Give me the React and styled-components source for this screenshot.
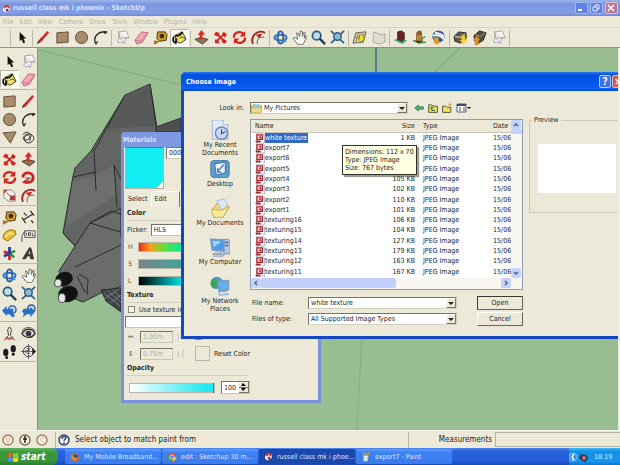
import React from "react";
import styled, { createGlobalStyle, css } from "styled-components";

const Global = createGlobalStyle`
  * { box-sizing: border-box; }
  html, body { margin: 0; height: 100%; overflow: hidden; }
  body, button, input, select, table {
    font-family: "DejaVu Sans Condensed", "Noto Sans", sans-serif;
    font-size: 7px;
    line-height: 8px;
    color: #26251f;
  }
  button, input, select { margin: 0; padding: 0; border: 0; border-radius: 0; background: none; min-width: 0; outline: none; }
  svg { display: block; }
`;

const Screen = styled.div`
  height: 100vh;
  display: grid;
  grid-template-rows: 16px 12px 20px minmax(0, 1fr) 18px 17px;
  background: #ece9d8;
  overflow: hidden;
`;

/* ---------- application window ---------- */
const AppTitle = styled.header`
  display: flex;
  align-items: center;
  gap: 2px;
  padding: 0 2px;
  background: linear-gradient(#9db4ec, #7b97e0 25%, #819de4 80%, #6f8bd6);
  color: #dbe5fb;
`;
const TitleText = styled.h1`
  flex: 1;
  margin: 0;
  font-size: 7px;
  line-height: 12px;
  font-weight: bold;
  color: inherit;
  white-space: nowrap;
`;
const CaptionButton = styled.button`
  width: 13px;
  height: 12px;
  border: 1px solid ${(p) => (p.$close ? "#dcc0d0" : "#a4b9f2")};
  border-radius: 2px;
  background: ${(p) => (p.$close ? "#bd7590" : "#5f80e2")};
`;
const MenuBar = styled.nav`
  display: flex;
  align-items: center;
  gap: 6px;
  padding-left: 3px;
  border-bottom: 1px solid #dcd8c8;
`;
const MenuItem = styled.button`
  color: #b9b5a4;
`;
const ToolRow = styled.div`
  display: flex;
  align-items: center;
  border-bottom: 1px solid #8f9082;
  padding-left: 9px;
  overflow: hidden;
`;
const Divider = styled.span`
  flex: none;
  width: 1px;
  height: 16px;
  margin: 0 ${(p) => p.$gap || 1}px;
  background: #bdb9a9;
`;
const ToolButton = styled.button`
  flex: none;
  display: grid;
  place-items: center;
  width: 19px;
  height: 18px;
  border: 1px solid transparent;
  ${(p) => p.$on && css`background: #fbfaf5; border-color: #b9b6a6 #fff #fff #b9b6a6;`}
`;
const Workspace = styled.main`
  display: grid;
  grid-template-columns: 38px minmax(0, 1fr) 2px;
  min-height: 0;
`;
const ToolPalette = styled.aside`
  display: grid;
  grid-template-columns: 19px 19px;
  align-content: start;
  padding-top: 4px;
  border-right: 1px solid #8f9082;
`;
const PaletteRule = styled.span`
  grid-column: 1 / -1;
  height: 1px;
  margin: 1px 0 2px;
  background: #bdb9a9;
`;
const Canvas = styled.section`
  position: relative;
  background: #98bd91;
  overflow: hidden;
`;
const Drawing = styled.svg`
  width: 100%;
  height: 100%;
`;
const Edge = styled.div`
  background: #f0eee4;
`;
const StatusBar = styled.footer`
  display: flex;
  align-items: center;
  padding-left: 2px;
  border-top: 1px solid #f8f6ee;
  font-size: 8px;
  line-height: 12px;
  white-space: nowrap;
`;
const StatusIcon = styled.button`
  width: 12px;
  height: 12px;
  margin-right: 5px;
`;
const StatusText = styled.span`
  flex: 1;
`;
const MeasureLabel = styled.label`
  display: flex;
  align-items: center;
  gap: 3px;
  padding-left: 29px;
`;
const MeasureInput = styled.input`
  width: 125px;
  height: 15px;
  border: 1px solid #b7b3a2;
  border-right: 0;
`;

/* ---------- taskbar ---------- */
const TaskBar = styled.footer`
  display: flex;
  background: linear-gradient(#4f8bf2, #2a62de 18%, #245bdb 75%, #1c49b8);
  color: #fff;
`;
const Start = styled.button`
  display: flex;
  align-items: center;
  gap: 2px;
  width: 58px;
  padding-left: 7px;
  border-radius: 0 6px 6px 0;
  background: linear-gradient(#5fb45f, #3b983b 25%, #3a963a 75%, #2b7a2d);
  color: #fff;
  font-size: 10px;
  font-weight: bold;
  font-style: italic;
  line-height: 14px;
`;
const Tasks = styled.div`
  flex: 1;
  display: flex;
  gap: 1px;
  padding: 1px 0 0 7px;
`;
const Task = styled.button`
  display: flex;
  align-items: center;
  gap: 4px;
  width: 96px;
  height: 15px;
  padding-left: 5px;
  border-radius: 2px;
  color: #d9e6ff;
  white-space: nowrap;
  background: ${(p) => (p.$on ? "#1a48ad" : "linear-gradient(#5c9bf9, #3c81f3 25%, #3a7cee)")};
`;
const Tray = styled.div`
  display: flex;
  align-items: center;
  gap: 5px;
  width: 51px;
  background: linear-gradient(#3fb9f6, #1290e8 20%, #1495ee 80%, #0c73c4);
  color: #d9efff;
`;

/* ---------- dialogs ---------- */
const Panel = styled.section`
  position: absolute;
  left: 83px;
  top: 84px;
  width: 200px;
  border: 3px solid #7d91da;
  border-top: 0;
  border-radius: 4px 4px 0 0;
  background: #ece9d8;
`;
const PanelTitle = styled.div`
  display: flex;
  align-items: center;
  height: 15px;
  padding-left: 1px;
  margin: 0 -2px;
  border-radius: 4px 4px 0 0;
  background: #7f98e2;
  color: #dbe5fb;
`;
const PanelBody = styled.div`
  display: flex;
  flex-direction: column;
  padding: 0 4px 1px 1px;
`;
const Preview = styled.div`
  display: flex;
  gap: 2px;
  height: 43px;
`;
const Swatch = styled.div`
  width: 39px;
  height: 42px;
  border: 1px solid #b6b3a5;
  border-top-color: #6f6e67;
  background: linear-gradient(135deg, #10edf3 91%, #f6f6ee 91%);
`;
const Field = styled.input`
  width: ${(p) => p.$w}px;
  height: 12px;
  padding-left: 2px;
  border: 1px solid #c9c6b8;
  border-top-color: #77756a;
  border-left-color: #77756a;
  background: ${(p) => (p.disabled ? "transparent" : "#fff")};
  color: ${(p) => (p.disabled ? "#b3b0a0" : "#26251f")};
`;
const PickerSelect = styled.select`
  appearance: none;
  width: 70px;
  height: 12px;
  padding-left: 2px;
  border: 1px solid #c9c6b8;
  border-top-color: #77756a;
  border-left-color: #77756a;
  background: #fff;
`;
const TabRow = styled.div`
  display: flex;
  height: 17px;
  padding-left: 1px;
  align-items: center;
`;
const Tab = styled.button`
  height: 16px;
  padding: 0 4px 0 2px;
  ${(p) => p.$on && css`border: 1px solid #fbfaf4; border-right-color: #77756a; border-bottom: 0; background: #efecdd; padding-right: 12px;`}
`;
const Heading = styled.h2`
  margin: 0 0 0 2px;
  height: 14px;
  width: 121px;
  padding-top: 2px;
  font-size: 7px;
  line-height: 9px;
  font-weight: bold;
  border-bottom: 1px solid #d2cfc0;
`;
const FieldRow = styled.label`
  display: flex;
  align-items: center;
  gap: 3px;
  height: 17px;
  padding-left: 2px;
`;
const Letter = styled.span`
  width: 6px;
  margin: 0 1px;
  color: #5a574c;
`;
const Range = styled.input`
  appearance: none;
  width: ${(p) => p.$w}px;
  height: 10px;
  background: ${(p) => p.$fill};
  border: 1px solid #b8b5a8;
  &::-webkit-slider-thumb { appearance: none; width: 1px; height: 10px; background: #77756a; }
`;
const CheckRow = styled.label`
  display: flex;
  align-items: center;
  gap: 4px;
  height: 13px;
  padding-left: 3px;
`;
const Check = styled.input`
  appearance: none;
  width: 7px;
  height: 7px;
  border: 1px solid #8a887c;
  background: #f7f6f0;
`;
const SizeGrid = styled.div`
  display: grid;
  grid-template-columns: 9px 33px 11px auto;
  grid-auto-rows: 17px;
  align-items: center;
  column-gap: 4px;
  padding-left: 2px;
`;
const Faint = styled.span`
  color: #a9add0;
`;
const ResetBox = styled.button`
  width: 15px;
  height: 15px;
  border: 1px solid #bdb8a8;
`;
const OpacityRow = styled.div`
  display: flex;
  align-items: center;
  gap: 6px;
  height: 23px;
  padding-left: 4px;
`;
const Spinner = styled.div`
  display: grid;
  grid-template-columns: 17px 10px;
  height: 13px;
  border: 1px solid #c9c6b8;
  border-top-color: #77756a;
  border-left-color: #77756a;
  background: #fff;
`;
const SpinnerInput = styled.input`
  padding-left: 2px;
`;
const SpinnerKeys = styled.div`
  display: grid;
  grid-template-rows: 1fr 1fr;
`;
const SpinnerKey = styled.button`
  display: grid;
  place-items: center;
  overflow: hidden;
  background: #ece9d8;
  border-right: 1px solid #77756a;
  border-bottom: 1px solid #77756a;
`;

const Dialog = styled.section`
  position: absolute;
  left: 143px;
  top: 24px;
  right: -8px;
  display: flex;
  flex-direction: column;
  border: 3px solid #1746c2;
  border-top: 0;
  border-radius: 5px 0 0 0;
  background: #ece9d8;
`;
const DialogTitle = styled.header`
  display: flex;
  align-items: center;
  height: 19px;
  margin: 0 -3px;
  padding: 0 2px 0 5px;
  border-radius: 5px 0 0 0;
  background: linear-gradient(#2b78f5, #0450e0 15%, #0458ea 70%, #0a62fa 88%, #0444bf);
  color: #fff;
`;
const HelpButton = styled.button`
  width: 12px;
  height: 13px;
  border: 1px solid #b9ccf8;
  border-radius: 2px;
  background: #3d71e8;
  color: #fff;
  font-size: 10px;
  line-height: 11px;
  font-weight: bold;
`;
const RedButton = styled(HelpButton)`
  margin-left: 1px;
  background: #dd5236;
`;
const DialogGrid = styled.div`
  display: grid;
  grid-template-columns: 66px 273px minmax(0, 1fr);
  grid-template-rows: 28px 171px 46px;
`;
const LookLabel = styled.label`
  padding: 13px 6px 0 0;
  text-align: right;
`;
const LookRow = styled.div`
  display: flex;
  align-items: center;
  gap: 3px;
  padding-top: 6px;
`;
const Combo = styled.div`
  display: flex;
  align-items: center;
  flex: none;
  width: ${(p) => p.$w}px;
  height: 12px;
  border: 1px solid #d5d2c4;
  border-top-color: #77756a;
  border-left-color: #77756a;
  background: #fff;
`;
const ComboSelect = styled.select`
  appearance: none;
  flex: 1;
  padding-left: 2px;
`;
const ComboInput = styled.input`
  flex: 1;
  padding-left: 2px;
`;
const DropButton = styled.button`
  display: grid;
  place-items: center;
  width: 10px;
  height: 10px;
  border: 1px solid #fff;
  border-right-color: #77756a;
  border-bottom-color: #77756a;
  background: #ece9d8;
`;
const NavButton = styled.button`
  width: ${(p) => (p.$wide ? 15 : 11)}px;
  height: 10px;
`;
const Places = styled.nav`
  grid-row: 2 / 4;
  display: flex;
  flex-direction: column;
  align-items: center;
  padding: 1px 0 0 6px;
  gap: 2px;
`;
const Place = styled.button`
  display: flex;
  flex-direction: column;
  align-items: center;
  gap: 1px;
  width: ${(p) => (p.$narrow ? 48 : 60)}px;
  height: 37px;
`;
const FileBox = styled.div`
  display: grid;
  grid-template-columns: minmax(0, 1fr) 11px;
  grid-template-rows: minmax(0, 1fr) 11px;
  border: 1px solid #8f9db4;
  background: #fff;
`;
const FileTable = styled.table`
  width: 100%;
  height: 157px;
  table-layout: fixed;
  border-collapse: collapse;
  white-space: nowrap;
`;
const Th = styled.th`
  height: 12px;
  padding: ${(p) => (p.$last ? "0" : "0 4px")};
  font-weight: normal;
  text-align: ${(p) => p.$align || "left"};
  background: #ece9d8;
  border-bottom: 1px solid #cbc7b8;
  overflow: hidden;
`;
const Td = styled.td`
  padding: ${(p) => (p.$last ? "0" : "0 4px")};
  overflow: hidden;
  text-align: ${(p) => p.$align || "left"};
`;
const NameCell = styled.div`
  display: flex;
  align-items: center;
  height: 10px;
`;
const FileName = styled.span`
  height: 10px;
  line-height: 10px;
  padding: 0 1px 0 0;
  ${(p) => p.$on && css`background: #316ac5; color: #fff;`}
`;
const VScroll = styled.div`
  display: flex;
  flex-direction: column;
  justify-content: space-between;
  background: #f7f6f0;
`;
const HScroll = styled.div`
  display: flex;
  grid-column: 1 / -1;
  padding-right: 11px;
  background: #f7f6f0;
`;
const ScrollButton = styled.button`
  flex: none;
  display: grid;
  place-items: center;
  width: 10px;
  height: 10px;
  border-radius: 2px;
  background: #c3d3fb;
`;
const Thumb = styled.div`
  width: 135px;
  height: 10px;
  margin-right: auto;
  border-radius: 2px;
  background: #bfcffa;
`;
const VThumb = styled.div`
  height: 4px;
  margin-bottom: auto;
  background: #c3d3fb;
`;
const PreviewSet = styled.fieldset`
  margin: -3px 0 0 6px;
  padding: 20px 0 0 8px;
  height: 97px;
  min-width: 0;
  border: 1px solid #cfccbd;
`;
const PreviewLegend = styled.legend`
  padding: 0 2px;
  margin-left: -6px;
`;
const PreviewImage = styled.div`
  width: 78px;
  height: 49px;
  background: #fff;
`;
const FileForm = styled.div`
  display: grid;
  grid-template-columns: 56px 149px 1fr;
  grid-template-rows: 12px 12px;
  row-gap: 4px;
  padding: 7px 0 0 2px;
  align-items: center;
`;
const FormButton = styled.button`
  justify-self: end;
  width: 46px;
  height: 14px;
  border: 1px solid ${(p) => (p.$main ? "#3a392f" : "#fff")};
  border-right-color: #67655a;
  border-bottom-color: #67655a;
  background: #ece9d8;
`;
const Tooltip = styled.div`
  position: absolute;
  left: 158px;
  top: 73px;
  padding: 2px 2px;
  border: 1px solid #33322c;
  background: #ffffe1;
  box-shadow: 2px 2px 1px rgba(60, 60, 40, 0.5);
  white-space: nowrap;
`;

/* ---------- icons ---------- */
const art = {
  arrow: <path d="M6 2v10l2-2 2 4 2-1-2-4h3z" fill="#111" />,
  pencil: <><path d="M1 15l2-4 9-10 2 2-9 10z" fill="#d52a2e" /><path d="M3 11l2 2M5 9l2 2" stroke="#7e1517" /><path d="M1 15l1-3 2 1z" fill="#333" /></>,
  rect: <path d="M2 3l12-1v11L2 14z" fill="#a88b6b" stroke="#604c38" />,
  circle: <circle cx="8" cy="8" r="6.5" fill="#a88b6b" stroke="#604c38" />,
  tri: <path d="M1 3l14-1-6 12z" fill="#a88b6b" stroke="#604c38" />,
  arc: <path d="M3 15C-1 7 6 1 15 2M3 15l2-3M12 4l3-2" fill="none" stroke="#2b2924" strokeWidth="1.4" />,
  free: <path d="M2 5c4-6 12 0 7 4s-9 1-5-3 12 0 9 5-11 3-9-3 8-1 5 4" fill="none" stroke="#222" strokeWidth="1" />,
  cube: <path d="M4 2l8-1 3 7-4 1-1 5-7-1 1-4zM4 2l1 7 10-1M5 9l5 5" fill="#fbfafa" stroke="#a5a5ad" />,
  eraser: <><path d="M1 11l7-9 7 1-6 10-6 2z" fill="#f2a7b5" stroke="#bd6b7d" /><path d="M1 11l6 1 8-9M7 12l-1 2" fill="none" stroke="#c87888" /></>,
  tape: <><path d="M5 2h8l2 3-1 6-7 1-3-3z" fill="#d89a25" stroke="#493819" /><circle cx="9.500" cy="6.500" r="2.500" fill="#36301f" /><path d="M6 12l-5 3M1 12l4 1" stroke="#a0791c" strokeWidth="2" /></>,
  paint: <><path d="M3 6l8-4 4 8-6 4-5-2z" fill="#f0e36a" stroke="#37351b" /><path d="M3 6c4 1 7-1 8-4M2 7c-2 4 0 6 2 7l1-5" fill="none" stroke="#111" strokeWidth="1.800" /><path d="M8 9c2-2 4-2 6 1" stroke="#333" fill="none" /></>,
  push: <><path d="M1 10l6-2 8 2-6 5z" fill="#8f7458" stroke="#4c3b2a" /><path d="M8 0l4 5H9v5H6V5H4z" fill="#dc2a28" /></>,
  move: <><path d="M3 3l10 10M13 3L3 13" stroke="#d5231f" strokeWidth="2" /><path d="M1 5l2-3 4 1-2 4zM11 2l4 3-3 3-2-4zM2 10l3 0 2 4-5 0zM11 9l4 3-3 3-3-3z" fill="#d5231f" /></>,
  rotate: <><path d="M2 8C2 2 9 1 12 4M14 8c0 6-7 7-10 4" fill="none" stroke="#d5231f" strokeWidth="2.500" /><path d="M14 1v6H8zM2 15V9h6z" fill="#d5231f" /></>,
  follow: <><path d="M2 8c0-7 11-6 11 0s-7 6-10 4" fill="none" stroke="#cc2520" strokeWidth="3" /><path d="M4 8h7l-4 4z" fill="#8e6e5d" /><path d="M1 13l5-3v5z" fill="#d5231f" /></>,
  offset: <><path d="M2 15C-1 6 7-1 15 3" fill="none" stroke="#a52220" strokeWidth="2" /><path d="M7 15c-2-4 2-9 7-7" fill="none" stroke="#555" /><path d="M5 5l7-1-3 5z" fill="#d5231f" /></>,
  scale: <><path d="M2 2h8l4 4v8H6L2 10z" fill="#f4f1e8" stroke="#8c887d" /><path d="M5 5l5 5" stroke="#a33" /><path d="M8 13h6V8H9zM2 2h4L2 6z" fill="#a2453f" /></>,
  dim: <path d="M2 11l11-7M1 8l4 6M10 1l4 5M3 3l3 3M11 11l2 3" fill="none" stroke="#2b2924" strokeWidth="1.300" />,
  prot: <><path d="M1 11C1 4 8 0 14 3l1 4-9 7z" fill="#e9bd30" stroke="#99731d" /><path d="M4 10c1-4 4-5 8-4" fill="none" stroke="#fae9a1" strokeWidth="2" /></>,
  label: <><path d="M1 15V9l3-6h11v7H4V3" fill="#f5f4ed" stroke="#444" /><path d="M6 5v3M8 5v3h2V5H8M12 5v3h2" fill="none" stroke="#444" /></>,
  axes: <><path d="M8 8v7M8 8L2 6" stroke="#d5231f" strokeWidth="3" /><path d="M8 8l6-3M8 8l5 4" stroke="#238a39" strokeWidth="2.500" /><path d="M8 8V1M8 8l-6 3" stroke="#273fa4" strokeWidth="3" /></>,
  solid: <><path d="M1 14L9 1l2 1 3 12h-4l-1-3H7l-2 3z" fill="#3e3c37" /><path d="M8 8l1-3 1 4z" fill="#ddd" /></>,
  orbit: <><ellipse cx="8" cy="8" rx="6.500" ry="3" fill="none" stroke="#3273bd" strokeWidth="2" /><ellipse cx="8" cy="8" rx="3" ry="6.500" fill="none" stroke="#2b5c9b" strokeWidth="2" /><path d="M11 9l4 3-5 2zM1 7l4-3v5z" fill="#3d8adb" /></>,
  pan: <path d="M6 15L1 9l2-1 3 2-1-7 2 1 1 3 1-6 2 1v5l2-5 1 1-1 6 2-3 1 1-3 6-2 3z" fill="#fdfdfa" stroke="#686560" />,
  zoom: <><circle cx="6" cy="6" r="4.500" fill="#b9ddeb" stroke="#305982" strokeWidth="1.800" /><path d="M9 9l6 6" stroke="#243c60" strokeWidth="2.500" /></>,
  extents: <><path d="M1 1l14 13M15 1L1 14" stroke="#37658d" strokeWidth="2" /><circle cx="8" cy="7" r="4" fill="#8bbbd3" stroke="#305982" strokeWidth="1.500" /></>,
  prev: <><circle cx="11" cy="6" r="4" fill="#c5dfec" stroke="#305982" strokeWidth="1.500" /><path d="M0 7l5-5v3h7v5l2 3-3 1-3-3H5v2z" fill="#2870cb" /></>,
  next: <><circle cx="11" cy="5" r="4" fill="#c5dfec" stroke="#305982" strokeWidth="1.500" /><path d="M15 8l-5-5v2H3L1 8l2 2-1 4 4-3h4v3z" fill="#2870cb" /></>,
  camera: <><path d="M8 1l2 3-1 6 3 3H4l3-3-1-6z" fill="#f1e5db" stroke="#3b3630" /><path d="M2 15l4-2 2 2 2-2 4 2" fill="none" stroke="#c33" /></>,
  look: <><path d="M1 8c4-7 12-5 14 0-4 6-11 5-14 0z" fill="#dfddd6" stroke="#333" strokeWidth="1.500" /><circle cx="8" cy="8" r="3" fill="#383a43" /><path d="M1 5c4-5 11-4 14 0" fill="none" stroke="#555" /></>,
  feet: <><ellipse cx="4" cy="9" rx="2.800" ry="4" fill="#1d1d1c" /><ellipse cx="12" cy="5" rx="2.800" ry="4" fill="#1d1d1c" /><circle cx="5" cy="14.500" r="1.500" /><circle cx="12" cy="11" r="1.500" /></>,
  section: <><circle cx="8" cy="8" r="5.500" fill="#f2f1ec" stroke="#333" /><path d="M8 0v16M0 8h16M6 5c5-1 5 2 0 2s0 4 4 3" fill="none" stroke="#555" /><path d="M12 4l4 4-4 4z" fill="#222" /></>,
  map: <><path d="M4 3l11-1-3 11-11 1z" fill="#d9d29e" stroke="#5a5e57" /><path d="M7 3L4 13M12 3L9 13M3 8l10-1" stroke="#838979" /><path d="M8 5h4v3h2l-4 5-4-4h2z" fill="#f6e024" stroke="#a08a21" /></>,
  terrain: <path d="M3 2l8 3 4-1v9l-6 2-7-2z" fill="#dddcd5" stroke="#aaa89f" />,
  place: <><path d="M1 11l4-2 10 2-5 4z" fill="#3ca477" /><path d="M5 2l4-1 3 2v7l-3 2-4-2z" fill="#6c2620" stroke="#402522" /></>,
  person: <><path d="M5 3h5l1 9H5z" fill="#c78433" stroke="#7e5428" /><circle cx="8" cy="3" r="2.500" fill="#8a5928" /><path d="M1 11l6 3 8-1M9 11l5-4" stroke="#519548" strokeWidth="1.500" /></>,
  globe: <><circle cx="8" cy="7" r="6.500" fill="#3858a8" /><path d="M2 6c4-1 9 0 12 4M4 3c4 0 8 2 10 4" stroke="#fff" strokeWidth="2" fill="none" /><path d="M3 8h5v4h2l-4 4-4-4h1z" fill="#df9b25" /></>,
  getm: <><path d="M1 7l5-5 8 1v6l-6 5-6-2z" fill="#615a43" stroke="#2e2b23" /><path d="M2 7l6 1 5-4" fill="none" stroke="#bab99e" strokeWidth="1.500" /><path d="M9 6h4v5h2l-4 4-4-4h2z" fill="#f4cf25" /></>,
  sharem: <><path d="M2 6l6-5 7 2-3 8-5 3-4-2z" fill="#514b40" stroke="#292621" /><path d="M4 5l5 2 5-4" fill="none" stroke="#aaa58f" /><path d="M3 16V11H1l4-5 4 5H7v5z" fill="#de8c23" /></>,
  logo: <><path d="M2 7l6-5 6 2v6l-7 5-5-3z" fill="#fff" /><path d="M3 5l5-4 6 3-1 5-5-4-3 4z" fill="#ce3744" /><path d="M6 10l4-2 2 3-4 3z" fill="#8e2638" /></>,
  flag: <><path d="M1 3c3-2 4-1 6 0v5c-2-1-4-1-6 0z" fill="#ed5733" /><path d="M8 3c3 1 4 1 7-1v6c-2 1-4 1-7 0z" fill="#8bcc46" /><path d="M1 9c2-1 4-1 6 0v5c-2-1-4-1-6 0z" fill="#4c8ff4" /><path d="M8 9c3 1 4 1 7-1v5c-2 2-4 2-7 1z" fill="#f9d43a" /></>,
  firefox: <><circle cx="8" cy="8" r="7" fill="#e26b23" /><circle cx="9" cy="7" r="4" fill="#355fa5" /><path d="M2 6c3 0 4 5 10 4-2 4-9 3-10-4z" fill="#f5a23a" /></>,
  chrome: <><circle cx="8" cy="8" r="7" fill="#d94b36" /><path d="M2 5l6 10C1 15 0 9 2 5z" fill="#49a354" /><path d="M8 15l4-7h3c0 4-3 7-7 7z" fill="#f0cb42" /><circle cx="8" cy="8" r="3.500" fill="#4b8be6" stroke="#fff" /></>,
  paintapp: <><path d="M3 5h9l-1 10H4z" fill="#dbe8ef" stroke="#68798a" /><path d="M5 6L3 1M8 6V0M10 6l3-5" stroke="#e59c44" strokeWidth="2" /></>,
  jpeg: <><path d="M3 0h9l3 3v13H3z" fill="#fff" stroke="#88859d" /><path d="M3 3h9v7H3z" fill="#f3d5d6" stroke="#a72a30" strokeWidth="2" /><path d="M6 7l3-3 2 5z" fill="#b5343a" /><path d="M1 12h8v3H1z" fill="#9f2532" /></>,
  folder: <><path d="M1 4l4-2 2 2h8v10H1z" fill="#e8c95a" stroke="#8d7836" /><path d="M4 2h9v7H4z" fill="#9bc7d9" /><path d="M1 8h14v6H1z" fill="#f1db7a" /></>,
  back: <path d="M1 8l6-5v3h8v4H7v3z" fill="#4daa77" stroke="#24704a" />,
  up: <><path d="M1 3h5l2 2h7v10H1z" fill="#efdf6c" stroke="#57532f" strokeWidth="1.500" /><path d="M6 12V7M3 9l3-3 3 3M6 12h5" fill="none" stroke="#286432" strokeWidth="1.500" /></>,
  newf: <><path d="M1 5h5l2 2h6v8H1z" fill="#efdf6c" stroke="#57532f" strokeWidth="1.500" /><path d="M13 0v6M10 3h6" stroke="#d3a520" strokeWidth="1.500" /></>,
  recent: <><path d="M3 0h14l6 6v19H3z" fill="#e2ebfa" stroke="#8da5cb" /><path d="M17 0v6h6" fill="#fff" stroke="#8da5cb" /><circle cx="15" cy="17" r="8" fill="#c9d9f2" stroke="#6d87b6" strokeWidth="2" /><path d="M15 12v6l5-3" fill="none" stroke="#33508c" strokeWidth="1.500" /></>,
  desktop: <><rect x="1" y="2" width="24" height="22" rx="4" fill="#5f9ed2" stroke="#35699c" /><path d="M6 6l14-2v14L8 21z" fill="#edf5fc" stroke="#3e78ab" strokeWidth="1.500" /><path d="M10 16l8-9M10 12v5h5" stroke="#366b9e" strokeWidth="1.500" fill="none" /></>,
  docs: <><path d="M3 15L13 3l12 9-9 14H5z" fill="#f2d873" stroke="#b38e37" /><path d="M9 4l9-3 5 8-8 7z" fill="#deeafa" stroke="#8db0d1" /><path d="M2 15l13 1 10-5-8 14H5z" fill="#f9eb9d" stroke="#c3a348" /></>,
  computer: <><path d="M17 3h7l2 2v17h-8z" fill="#b8c5df" stroke="#6a7ea9" /><path d="M19 7h5M19 11h5" stroke="#5871a5" strokeWidth="2" /><path d="M1 3l17 1v14L3 17z" fill="#4d9ae6" stroke="#7b99bd" strokeWidth="2" /><path d="M3 5l12 1L5 13z" fill="#a6d4f9" /><path d="M7 18h6l2 4H3l16 1-2 2H4" fill="#c7d1e5" stroke="#8091b1" /></>,
  network: <><circle cx="9" cy="9" r="8" fill="#4b9ac9" /><path d="M3 4c6-3 9 3 6 7-2 3-3 4-2 6-5-1-9-7-4-13z" fill="#3ba357" /><path d="M10 7l14-1v12l-12 2z" fill="#5fb4ec" stroke="#7d98c1" strokeWidth="2" /><path d="M12 20h8l4 4-12 1z" fill="#d5ddf0" stroke="#7b8fbb" /></>,
};
const IconSvg = styled.svg`
  flex: none;
  width: ${(p) => p.$s}px;
  height: ${(p) => p.$s}px;
`;
const Icon = ({ name, size = 15, box = 16 }) => (
  <IconSvg $s={size} viewBox={`0 0 ${box} ${box}`} aria-hidden="true">{art[name]}</IconSvg>
);
const Caret = ({ turn = 0, color = "#222", open }) => (
  <svg width="6" height="6" viewBox="0 0 6 6" aria-hidden="true">
    <path d={open ? "M1 2l2 2 2-2" : "M0 2h6L3 5z"} transform={`rotate(${turn} 3 3)`} fill={open ? "none" : color} stroke={open ? color : "none"} strokeWidth="1.500" />
  </svg>
);

const topTools = [["arrow"], ["pencil", "rect", "circle", "arc"], ["cube", "eraser", "tape", "paint"], ["push", "move", "rotate", "offset"], ["orbit", "pan", "zoom", "extents"], ["map", "terrain"], ["place", "person", "globe"], ["getm", "sharem", "cube"]];
const sideTools = [["arrow", "cube", "paint", "eraser"], ["rect", "pencil", "circle", "arc", "tri", "free"], ["move", "push", "rotate", "follow", "scale", "offset"], ["tape", "dim", "prot", "label", "axes", "solid"], ["orbit", "pan", "zoom", "extents", "prev", "next"], ["camera", "look", "feet", "section"]];
const files = [["white texture", 1], ["export7", 118], ["export6", 112], ["export5", 109], ["export4", 105], ["export3", 102], ["export2", 110], ["export1", 101], ["texturing16", 106], ["texturing15", 104], ["texturing14", 127], ["texturing13", 179], ["texturing12", 163], ["texturing11", 167]];

const Aircraft = () => (
  <Drawing viewBox="38 48 580 382" preserveAspectRatio="xMinYMin slice" aria-label="Aircraft model">
    <path d="M38 50L182 85" stroke="#84a97d" strokeWidth="1" />
    <path d="M376 48V74" stroke="#39708a" strokeWidth="1.500" />
    <path d="M362 336L357 430" stroke="#86ae80" />
    <path d="M460 48L430 76" stroke="#6f9d6b" />
    <g stroke="#2c2d2e" strokeLinejoin="round">
      <path d="M150 84l-25 11-34 56-16 17-2 8-10 57 12 13 15-20 92-30V120l-25 8z" fill="#636464" />
      <path d="M150 84l-25 11-20 34 50-3z" fill="#585959" stroke="none" />
      <path d="M96 175l18-10 2 30-50 32 7-45z" fill="#6d6e6e" stroke="none" />
      <path d="M150 84l6 42M156 127l25-9v14h-25z" fill="#4d4f50" />
      <path d="M94 151l2 40M114 165l3 42M114 165l7 14M73 177l23-5M125 95l-31 56M63 233l12 13" fill="none" />
      <path d="M90 223l-31 48 6 24 18 7 18-9 30-10v-65l-20-7z" fill="#6a6b6b" />
      <path d="M90 223l31-15v30M90 223l31 9M75 267l46-22M77 276l8 16M79 274l9 5-1 16" fill="none" />
      <path d="M101 290l20-2v24l-15-11z" fill="#404347" />
      <path d="M104 293l16 13M108 291l13 11M113 290l8 8M104 299l15-10M110 303l11-8" stroke="#90938f" strokeWidth=".7" />
    </g>
    <g fill="#111214">
      <ellipse cx="64" cy="279" rx="9" ry="7" transform="rotate(-20 64 279)" />
      <ellipse cx="68" cy="294" rx="10" ry="8" transform="rotate(-15 68 294)" />
    </g>
    <g fill="#e4e6e8" stroke="#4b4c50" strokeWidth="1">
      <ellipse cx="58" cy="283" rx="3.500" ry="4" />
      <ellipse cx="62" cy="298" rx="3.500" ry="4.500" />
    </g>
  </Drawing>
);

const MaterialsPanel = () => (
  <Panel aria-label="Materials">
    <PanelTitle><TitleText as="h2">Materials</TitleText></PanelTitle>
    <PanelBody>
      <Preview><Swatch /><Field $w={100} defaultValue="000Texture" aria-label="Material name" /></Preview>
      <TabRow><Tab>Select</Tab><Tab $on>Edit</Tab></TabRow>
      <Heading>Color</Heading>
      <FieldRow>Picker:<PickerSelect><option>HLS</option></PickerSelect></FieldRow>
      <FieldRow><Letter>H</Letter><Range type="range" $w={90} defaultValue="100" $fill="linear-gradient(90deg,#f02a10,#f8a020 13%,#60e030 28%,#10e890 46%,#20c0f0)" /></FieldRow>
      <FieldRow><Letter>S</Letter><Range type="range" $w={90} defaultValue="100" $fill="linear-gradient(90deg,#758585,#45a3a0 50%,#00f0f0)" /></FieldRow>
      <FieldRow><Letter>L</Letter><Range type="range" $w={90} defaultValue="100" $fill="linear-gradient(90deg,#000,#00d8d8 46%,#fff)" /></FieldRow>
      <Heading>Texture</Heading>
      <CheckRow><Check type="checkbox" />Use texture image</CheckRow>
      <Field $w={120} aria-label="Texture file" />
      <SizeGrid>
        <Letter>↔</Letter><Field $w={33} defaultValue="1.00m" disabled aria-label="Width" /><Faint>⟩</Faint><CheckRow><Check type="checkbox" /><Faint>Colorize</Faint></CheckRow>
        <Letter>↕</Letter><Field $w={33} defaultValue="0.75m" disabled aria-label="Height" /><Faint>⟩ ⸾</Faint><CheckRow as="div"><ResetBox aria-label="Reset Color" />Reset Color</CheckRow>
      </SizeGrid>
      <Heading>Opacity</Heading>
      <OpacityRow>
        <Range type="range" $w={86} defaultValue="100" aria-label="Opacity" $fill="linear-gradient(90deg,#fff,#20e8f0 90%)" />
        <Spinner>
          <SpinnerInput defaultValue="100" aria-label="Opacity value" />
          <SpinnerKeys>
            <SpinnerKey aria-label="More"><svg width="5" height="3"><path d="M0 3h5L2 0z" /></svg></SpinnerKey>
            <SpinnerKey aria-label="Less"><svg width="5" height="3"><path d="M0 0h5L2 3z" /></svg></SpinnerKey>
          </SpinnerKeys>
        </Spinner>
      </OpacityRow>
    </PanelBody>
  </Panel>
);

const places = [["recent", "My Recent Documents", true], ["desktop", "Desktop"], ["docs", "My Documents"], ["computer", "My Computer"], ["network", "My Network Places", true]];

const ChooseImage = () => (
  <Dialog role="dialog" aria-label="Choose Image">
    <DialogTitle><TitleText as="h2">Choose Image</TitleText><HelpButton>?</HelpButton><RedButton>×</RedButton></DialogTitle>
    <DialogGrid>
      <LookLabel htmlFor="look">Look in:</LookLabel>
      <LookRow>
        <Combo $w={158}><Icon name="folder" size={11} /><ComboSelect id="look"><option>My Pictures</option></ComboSelect><DropButton aria-label="Show folders"><Caret /></DropButton></Combo>
        <span />
        {["back", "up", "newf"].map((n) => <NavButton key={n} aria-label={n}><Icon name={n} size={10} /></NavButton>)}
        <NavButton $wide aria-label="Views">
          <svg width="15" height="10" viewBox="0 0 15 10"><path d="M1 1h9v8H1z" fill="#fff" stroke="#555f80" /><path d="M1 2h9" stroke="#3d4a6c" strokeWidth="2" /><path d="M3 5h2M3 7h2M7 5h2M7 7h2" stroke="#444" /><path d="M11 4h4l-2 2z" /></svg>
        </NavButton>
      </LookRow>
      <span />
      <Places>
        {places.map(([icon, label, narrow]) => <Place key={icon} $narrow={narrow}><Icon name={icon} size={20} box={26} />{label}</Place>)}
      </Places>
      <FileBox>
        <FileTable>
          <colgroup><col width="104" /><col width="64" /><col width="74" /><col /></colgroup>
          <thead><tr><Th>Name</Th><Th $align="right">Size</Th><Th>Type</Th><Th $last>Date</Th></tr></thead>
          <tbody>
            {files.map(([name, size], i) => (
              <tr key={name}>
                <Td><NameCell><Icon name="jpeg" size={10} /><FileName $on={i === 0}>{name}</FileName></NameCell></Td>
                <Td $align="right">{size} KB</Td><Td>JPEG Image</Td><Td $last>15/06</Td>
              </tr>
            ))}
          </tbody>
        </FileTable>
        <VScroll><ScrollButton aria-label="Scroll up"><Caret open turn={180} color="#4d6185" /></ScrollButton><VThumb /><ScrollButton aria-label="Scroll down"><Caret open color="#4d6185" /></ScrollButton></VScroll>
        <HScroll><ScrollButton aria-label="Scroll left"><Caret open turn={90} color="#4d6185" /></ScrollButton><Thumb /><ScrollButton aria-label="Scroll right"><Caret open turn={-90} color="#4d6185" /></ScrollButton></HScroll>
      </FileBox>
      <PreviewSet><PreviewLegend>Preview</PreviewLegend><PreviewImage /></PreviewSet>
      <FileForm>
        <label htmlFor="fname">File name:</label>
        <Combo $w={149}><ComboInput id="fname" defaultValue="white texture" /><DropButton aria-label="Recent names"><Caret /></DropButton></Combo>
        <FormButton $main>Open</FormButton>
        <label htmlFor="ftype">Files of type:</label>
        <Combo $w={149}><ComboSelect id="ftype"><option>All Supported Image Types</option></ComboSelect><DropButton aria-label="Show types"><Caret /></DropButton></Combo>
        <FormButton>Cancel</FormButton>
      </FileForm>
    </DialogGrid>
    <Tooltip role="tooltip">Dimensions: 112 x 70<br />Type: JPEG Image<br />Size: 767 bytes</Tooltip>
  </Dialog>
);

const ring = (inner, color, r = 5) => (
  <svg width="12" height="12" viewBox="0 0 12 12"><circle cx="6" cy="6" r={r} fill="#faf6ea" stroke={color} strokeWidth="1.500" />{inner}</svg>
);

export default function App() {
  return (
    <Screen>
      <Global />
      <AppTitle>
        <Icon name="logo" size={9} />
        <TitleText>russell class mk i phoenix - SketchUp</TitleText>
        <CaptionButton aria-label="Minimize"><svg width="10" height="10"><path d="M2 7h4" stroke="#fff" strokeWidth="2" /></svg></CaptionButton>
        <CaptionButton aria-label="Restore"><svg width="10" height="10"><path d="M4 4V2h4v4H6M2 4h4v4H2z" fill="none" stroke="#e8efff" /></svg></CaptionButton>
        <CaptionButton $close aria-label="Close"><svg width="10" height="10"><path d="M2 2l6 6M8 2L2 8" stroke="#fff" strokeWidth="1.500" /></svg></CaptionButton>
      </AppTitle>
      <MenuBar>{["File", "Edit", "View", "Camera", "Draw", "Tools", "Window", "Plugins", "Help"].map((m) => <MenuItem key={m}>{m}</MenuItem>)}</MenuBar>
      <ToolRow>
        <Divider />
        {topTools.map((g, i) => (
          <React.Fragment key={i}>
            {g.map((n) => <ToolButton key={n} $on={n === "paint"} aria-label={n}><Icon name={n} /></ToolButton>)}
            <Divider />
          </React.Fragment>
        ))}
      </ToolRow>
      <Workspace>
        <ToolPalette>
          {sideTools.map((g, i) => (
            <React.Fragment key={i}>
              {g.map((n) => <ToolButton key={n} $on={n === "paint"} aria-label={n}><Icon name={n} /></ToolButton>)}
              <PaletteRule />
            </React.Fragment>
          ))}
        </ToolPalette>
        <Canvas><Aircraft /><MaterialsPanel /><ChooseImage /></Canvas>
        <Edge />
      </Workspace>
      <StatusBar>
        <StatusIcon aria-label="Geo-location">{ring(<path d="M4 5c0-3 4-3 4 0L6 9z" fill="none" stroke="#d5b48c" />, "#a9805c")}</StatusIcon>
        <StatusIcon aria-label="Credits">{ring(<path d="M6 2v7M4 5h4" stroke="#222" strokeWidth="1.500" />, "#8f6844")}</StatusIcon>
        <StatusIcon aria-label="Sign in">{ring(<path d="M8 4c-4-2-5 4 0 4" fill="none" stroke="#d5b48c" />, "#a9805c")}</StatusIcon>
        <Divider $gap={2} />
        <StatusIcon aria-label="Help">{ring(<path d="M4 5c0-3 4-3 4-1 0 1-2 1-2 3M6 8v2" fill="none" stroke="#1e3468" strokeWidth="1.300" />, "#2c4270")}</StatusIcon>
        <StatusText>Select object to match paint from</StatusText>
        <Divider />
        <MeasureLabel>Measurements<MeasureInput /></MeasureLabel>
      </StatusBar>
      <TaskBar>
        <Start><Icon name="flag" size={12} />start</Start>
        <Tasks>
          <Task><Icon name="firefox" size={10} />My Mobile Broadband...</Task>
          <Task><Icon name="chrome" size={10} />edit : Sketchup 30 m...</Task>
          <Task $on><Icon name="logo" size={9} />russell class mk i phoe...</Task>
          <Task><Icon name="paintapp" size={10} />export7 - Paint</Task>
        </Tasks>
        <Tray>
          <svg width="20" height="14" viewBox="0 0 20 14"><circle cx="4" cy="7" r="4" fill="#318fe8" stroke="#8ecbff" strokeWidth=".8" /><path d="M5 4L3 7l2 3" fill="none" stroke="#fff" strokeWidth="1.500" /><path d="M10 8c0-5 8-5 9 0l-2 4-4-1z" fill="#303959" /><circle cx="15" cy="8" r="2" fill="#dc6e61" /></svg>
          <time>18:19</time>
        </Tray>
      </TaskBar>
    </Screen>
  );
}
